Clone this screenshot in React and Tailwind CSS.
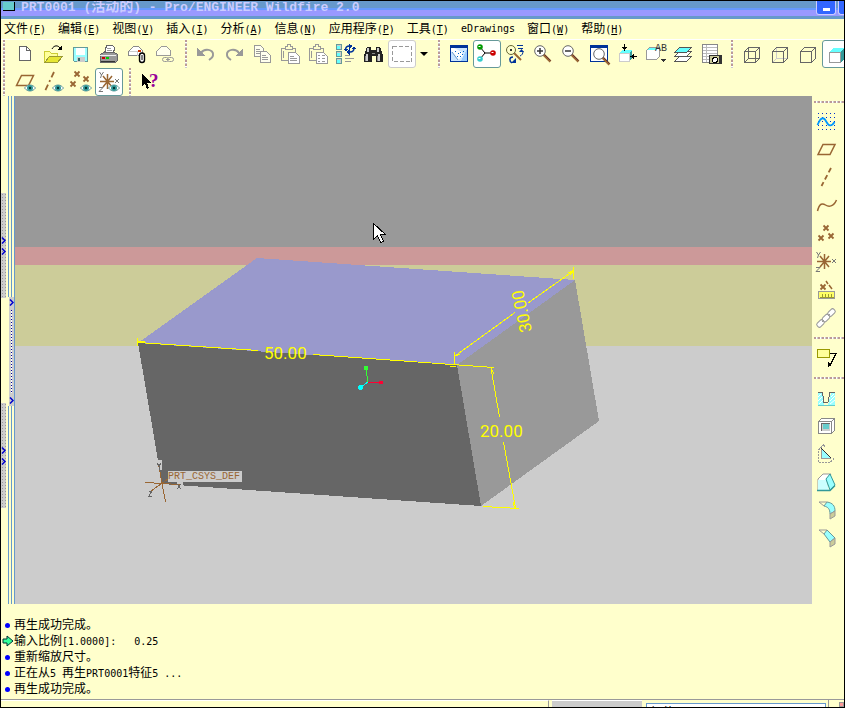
import { Fragment } from "react";

const BROWN = "#996633";
const GREY = "#999999";
const CYAN = "#99ffff";

const CJK = /([\u3000-\u9fff]+)/;

// Latin is set smaller than the Chinese so two letters take one character cell.
function Mixed({ text }) {
  return text.split(CJK).map((part, i) =>
    CJK.test(part) ? (
      <span key={i} className="text-xs leading-4">
        {part}
      </span>
    ) : (
      <Fragment key={i}>{part}</Fragment>
    )
  );
}

function Icon({ children }) {
  return (
    <svg
      className="shrink-0 overflow-visible"
      width="20"
      height="20"
      viewBox="0 0 20 20"
      fill="none"
      shapeRendering="crispEdges"
      aria-hidden="true"
    >
      {children}
    </svg>
  );
}

function Eye() {
  return (
    <g shapeRendering="auto">
      <path d="M9.500 16c3-4 8-4 11 0c-3 4-8 4-11 0z" fill="#ffffff" stroke="#669999" />
      <circle cx="15" cy="16" r="3" fill="#339999" />
      <circle cx="15" cy="16" r="1.200" fill="#003333" />
    </g>
  );
}

function Lens({ x, y, children }) {
  return (
    <g transform={`translate(${x} ${y})`} shapeRendering="auto">
      <path d="M3.500 3.500L10.500 10.500" stroke={BROWN} strokeWidth="2.500" />
      <path d="M4.500 3.500l6 6" stroke="#663333" />
      <circle r="5.300" fill="#ffffff" stroke="#666666" />
      {children}
    </g>
  );
}

function Cross({ x, y }) {
  return (
    <path
      d={`M${x - 2.5} ${y - 2.5}l5 5M${x + 2.5} ${y - 2.5}l-5 5`}
      stroke={BROWN}
      strokeWidth="1.800"
      shapeRendering="auto"
    />
  );
}

const csys = (
  <g shapeRendering="auto">
    <path
      d="M1 9.500h14M4 4l9 11M13 4L4 15M8.500 2v15"
      stroke={BROWN}
      strokeWidth="1.500"
    />
    <path
      d="M0.500 0l2 3l2-3M2.500 3l-1 3M16 7l4 4M20 7l-4 4M0 15.500h4l-4 4h4"
      stroke="#777777"
    />
  </g>
);

const clipboard = (
  <g stroke={GREY}>
    <path d="M1.500 4.500h4v-2h2v-2h3v2h2v2h3v12h-14z" fill="#ffffcc" />
    <path d="M5 5.500h8M3.500 7v7" />
    <path d="M8.500 8.500h7l4 4v7h-11z" fill="#ffffff" />
  </g>
);

const icons = {
  New: (
    <g stroke="#666666">
      <path d="M4.500 2.500h7l4 4v10h-11z" fill="#ffffff" />
      <path d="M11.500 2.500v4h4" />
    </g>
  ),
  Open: (
    <g>
      <path d="M1.500 7.500h5l2 2h6v3h-8l-5 6z" fill="#ffff99" stroke="#cccc33" />
      <path d="M1.500 18.500l5-6h13l-5 6z" fill="#e6e633" stroke="#999933" />
      <path d="M9 5c2-4 6-4 8-1" stroke="#000000" shapeRendering="auto" />
      <path d="M19 1v5h-5z" fill="#000000" />
    </g>
  ),
  Save: (
    <g>
      <path d="M2.500 3.500h14v14h-13l-1-1z" fill={CYAN} stroke="#669999" />
      <rect x="5" y="4" width="9" height="7" fill="#ffffff" />
      <rect x="6" y="13" width="8" height="5" fill="#cccccc" />
      <rect x="7" y="14" width="2" height="3" fill="#336666" />
    </g>
  ),
  Print: (
    <g>
      <path d="M5.500 9.500l2-8h6l2 2-1 6z" fill="#ffffff" stroke="#666666" />
      <path d="M8 4.500h4M8 6.500h5" stroke={GREY} />
      <path d="M1.500 10.500l3-2h11l3 2v6l-2 2h-15z" fill="#999999" stroke="#666666" />
      <path d="M1 11.500h16" stroke="#eeeeee" />
      <rect x="3" y="13" width="3" height="2" fill="#cc0000" />
      <rect x="7" y="13" width="3" height="2" fill="#00cc00" />
      <path d="M2 17.500h14" stroke="#333333" />
    </g>
  ),
  Mail: (
    <g>
      <path d="M1.500 11.500v-4l5-5h5l4 4v5z" fill="#ffffff" stroke="#888888" />
      <path d="M2 7.500h8v4" stroke="#cccccc" />
      <rect x="11" y="6" width="3" height="2" fill="#cc3300" />
      <g shapeRendering="auto">
        <rect
          x="12.500"
          y="9"
          width="5"
          height="9.500"
          rx="2.500"
          fill="#ffffff"
          stroke="#000000"
          strokeWidth="1.400"
        />
        <path d="M15 11v5" stroke="#000000" />
      </g>
    </g>
  ),
  "Send link": (
    <g stroke={GREY}>
      <path d="M1.500 11.500v-4l5-5h5l4 4v5z" fill="#ffffee" />
      <g shapeRendering="auto">
        <rect x="7.500" y="13.500" width="6" height="4" rx="2" fill="#ffffcc" />
        <rect x="12.500" y="13.500" width="6" height="4" rx="2" fill="#ffffcc" />
        <path d="M11 15.500h4" />
      </g>
    </g>
  ),
  Undo: (
    <g>
      <path
        d="M5 9c3-5 13-4 12 2c0 2-1 3-4 5"
        stroke={GREY}
        strokeWidth="2"
        shapeRendering="auto"
      />
      <path d="M1 4v8h8z" fill={GREY} />
    </g>
  ),
  Redo: (
    <g>
      <path
        d="M15 9c-3-5-13-4-12 2c0 2 1 3 4 5"
        stroke={GREY}
        strokeWidth="2"
        shapeRendering="auto"
      />
      <path d="M19 4v8h-8z" fill={GREY} />
    </g>
  ),
  Copy: (
    <g stroke={GREY}>
      <path d="M2.500 1.500h6l3 3v8h-9z" fill="#ffffee" />
      <path d="M4 5.500h4M4 7.500h5M4 9.500h5" />
      <path d="M8.500 7.500h6l4 4v7h-10z" fill="#ffffee" />
      <path d="M10 11.500h4M10 13.500h6M10 15.500h6" />
    </g>
  ),
  Paste: (
    <g>
      {clipboard}
      <path d="M10 12.500h4M10 14.500h7M10 16.500h7" stroke={GREY} />
    </g>
  ),
  "Paste special": (
    <g>
      {clipboard}
      <path
        d="M10 11.500h2M14 11.500h3M10 14.500h2M14 14.500h3M10 17.500h2M14 17.500h3"
        stroke={GREY}
      />
    </g>
  ),
  Regenerate: (
    <g>
      {[0, 7, 14].map((y) => (
        <g key={y}>
          <rect x="0.500" y={y + 0.5} width="5" height="5" fill="#cccccc" stroke="#669999" />
          <rect x="1" y={y + 2} width="3" height="3" fill="#66ffff" />
        </g>
      ))}
      <path
        d="M9.500 6c0-3 1-4 4-4M18 4c0 3-1 4-4 4"
        stroke="#003399"
        strokeWidth="1.500"
        shapeRendering="auto"
      />
      <path d="M13 0l4 2l-4 3zM14 5v6l-4-3zM7 5h5l-2 3zM15.500 5h5l-2.500-3z" fill="#003399" />
      <path d="M9 11.500h5M9 14.500h9M9 17.500h6" stroke={GREY} />
    </g>
  ),
  Find: (
    <g>
      <path d="M3 3h4v3h5V3h4l3 8v7h-7v-6H8v6H0v-7z" fill="#222222" />
      <path d="M4 4v4M14 4v4M3 10v7M15 10v7" stroke="#cccccc" strokeWidth="2" />
      <path d="M1 12v5M13 12v5M8 9h3" stroke="#888888" />
    </g>
  ),
  "Select box": (
    <rect
      x="0.500"
      y="2.500"
      width="19"
      height="15"
      stroke={GREY}
      strokeDasharray="4 2"
    />
  ),
  Repaint: (
    <g>
      <rect x="1.500" y="1.500" width="17" height="16" fill="#99ccff" stroke="#003399" />
      <path d="M2 4h16v1l-6 12H2z" fill="#cce6ff" />
      <path d="M1 2h18" stroke="#003399" strokeWidth="3" />
      <path d="M2 4h3l8 4l1 4l-5 4l-7-9z" fill="#ffffff" shapeRendering="auto" />
      <path d="M3 8l6 8" stroke="#6699cc" shapeRendering="auto" />
      <path
        d="M6 7.500h1M9 9.500h1M11 8.500h1M8 12.500h1M11 12.500h1M13 10.500h1M14 7.500h1"
        stroke="#0066cc"
      />
    </g>
  ),
  "Spin center": (
    <g shapeRendering="auto">
      <path d="M3 3l5 6h9M8 9l-5 6" stroke="#000000" />
      <circle cx="3" cy="3" r="2.800" fill="#009900" />
      <circle cx="3" cy="15" r="2.800" fill="#33cccc" />
      <circle cx="16" cy="9" r="2.800" fill="#cc0000" />
      <path d="M1.500 2.500h2M1.500 14.500h2M14.500 8.500h2" stroke="#ffffff" />
    </g>
  ),
  Orient: (
    <g shapeRendering="auto">
      <path d="M9 9l7 7" stroke={BROWN} strokeWidth="2" />
      <circle cx="6" cy="6" r="4.500" fill="#ffffcc" stroke="#666633" />
      <rect x="5" y="5" width="2" height="2" fill="#333333" />
      <path d="M12 1.500h6M13 4.500h5M18 7c0 3-1 4-3 5" stroke="#003399" />
      <path d="M14 8h5l-2.500-3z" fill="#003399" />
      <path d="M8 13c-4 0-4 4-1 6" stroke="#003399" strokeWidth="1.500" />
      <path d="M6 19h5v-5z" fill="#003399" />
    </g>
  ),
  "Zoom in": (
    <Lens x={7} y={7}>
      <path d="M-3 0h6M0-3v6" stroke="#333333" strokeWidth="1.500" />
    </Lens>
  ),
  "Zoom out": (
    <Lens x={7} y={7}>
      <path d="M-3 0h6" stroke="#333333" strokeWidth="1.500" />
    </Lens>
  ),
  Refit: (
    <g>
      <rect x="1.500" y="1.500" width="17" height="16" fill="#ffffff" stroke="#003399" />
      <path d="M1 2h18" stroke="#003399" strokeWidth="3" />
      <Lens x={10} y={10} />
    </g>
  ),
  Reorient: (
    <g>
      <path d="M2 9l4-3h9l-3 3z" fill="#66ffff" />
      <path d="M12 9l3-3v8l-3 3z" fill="#339999" />
      <rect x="2.500" y="9.500" width="10" height="8" fill="#ffffff" stroke="#cccccc" />
      <path d="M7.500 0v5M20 12.500h-5" stroke="#000000" />
      <path d="M5 3h5l-2.500 4zM17 10v5l-4-2.500z" fill="#000000" />
    </g>
  ),
  "Saved views": (
    <g>
      <path d="M1.500 6.500l3-3h10v9l-3 3h-10z" fill="#ffffff" stroke={GREY} />
      <path d="M2 6l3-2h9l-3 2z" fill="#66ffff" />
      <text x="10" y="7" fontSize="10" fill="#333333" fontFamily="Liberation Mono, monospace">
        AB
      </text>
      <path d="M15 15h6l-3 3z" fill="#333333" />
    </g>
  ),
  Layers: (
    <g stroke="#555555">
      <path d="M1.500 17.500l5-5h12l-5 5z" fill="#ffffff" />
      <path d="M1.500 12.500l5-5h12l-5 5z" fill="#ffffff" />
      <path d="M1.500 8.500l5-5h12l-5 5z" fill="#66ffff" />
    </g>
  ),
  "View manager": (
    <g>
      <rect x="1.500" y="0.500" width="15" height="18" fill="#ffffff" stroke="#888888" />
      <path
        d="M2 3.500h14M2 6.500h14M2 9.500h14M2 12.500h8M2 15.500h6M5.500 1v17"
        stroke="#bbbbbb"
      />
      <rect x="8.500" y="11.500" width="12" height="8" fill="#cccc99" stroke="#333333" />
      <circle cx="14" cy="16" r="2.500" fill="#ffffff" stroke="#000000" />
      <path d="M19 12v7" stroke="#333333" strokeWidth="2" />
    </g>
  ),
  Wireframe: (
    <path
      d="M2.500 7.500h11v11h-11zM6.500 3.500h11v11h-11zM2.500 7.500l4-4M13.500 7.500l4-4M2.500 18.500l4-4M13.500 18.500l4-4"
      stroke="#666666"
    />
  ),
  "Hidden line": (
    <g>
      <path d="M6.500 4v10.500H17M2.500 18.500l4-4" stroke="#cccccc" />
      <path d="M2.500 7.500h11v11h-11zM2.500 7.500l4-4h11v11l-4 4M13.500 7.500l4-4" stroke="#666666" />
    </g>
  ),
  "No hidden": (
    <path d="M2.500 7.500h11v11h-11zM2.500 7.500l4-4h11v11l-4 4M13.500 7.500l4-4" stroke="#666666" />
  ),
  Shading: (
    <g>
      <path d="M3 8l4-4h12l-4 4z" fill="#66ffff" />
      <path d="M14 8l5-4v10l-5 5z" fill="#339999" />
      <rect x="3.500" y="8.500" width="11" height="10" fill="#ffffff" stroke={GREY} />
    </g>
  ),
  "Plane display": (
    <g>
      <path
        d="M1.500 13.500l5-10h12l-5 10z"
        stroke={BROWN}
        strokeWidth="1.500"
        shapeRendering="auto"
      />
      <Eye />
    </g>
  ),
  "Axis display": (
    <g>
      <path
        d="M11 0L2 19"
        stroke={BROWN}
        strokeWidth="1.800"
        strokeDasharray="6 3 2 3"
        shapeRendering="auto"
      />
      <Eye />
    </g>
  ),
  "Point display": (
    <g>
      <Cross x={6} y={2} />
      <Cross x={15} y={7} />
      <Cross x={2} y={12} />
      <Eye />
    </g>
  ),
  "Csys display": (
    <g>
      {csys}
      <Eye />
    </g>
  ),
  Help: (
    <g>
      <path d="M2 2v12l3-2 2 5 2-1-2-5h4z" fill="#000000" />
      <text
        x="9"
        y="15"
        fontSize="19"
        fontWeight="bold"
        fill="#990099"
        fontFamily="Liberation Serif, serif"
      >
        ?
      </text>
    </g>
  ),
  Sketch: (
    <g>
      {[2, 6, 10, 14, 18].map((y) => (
        <path key={y} d={`M2 ${y - 0.5}h18`} stroke="#0033cc" strokeDasharray="1 3" />
      ))}
      <path
        d="M1.500 13c4-10 7-7 9-3s5 5 8 0"
        stroke="#0099ff"
        strokeWidth="1.800"
        shapeRendering="auto"
      />
    </g>
  ),
  Plane: (
    <path
      d="M2 14.500l5-10h12l-5 10z"
      stroke={BROWN}
      strokeWidth="1.500"
      shapeRendering="auto"
    />
  ),
  Axis: (
    <path
      d="M15 0L5.500 18"
      stroke={BROWN}
      strokeWidth="1.800"
      strokeDasharray="5 3"
      shapeRendering="auto"
    />
  ),
  Curve: (
    <path
      d="M1.500 15c2-8 5-8 8-6s8 2 11-5"
      stroke={BROWN}
      strokeWidth="1.500"
      shapeRendering="auto"
    />
  ),
  Point: (
    <g>
      <Cross x={10} y={4} />
      <Cross x={5} y={14} />
      <Cross x={15} y={12} />
    </g>
  ),
  Csys: csys,
  Analysis: (
    <g>
      <Cross x={7} y={7} />
      <path
        d="M10 1l2 3M13 5l3 4"
        stroke={BROWN}
        strokeWidth="1.500"
        shapeRendering="auto"
      />
      <rect x="2.500" y="11.500" width="16" height="7" fill="#ffff66" stroke={GREY} />
      <path d="M4 17.500h14M6.500 14v4M9.500 14v4M12.500 14v4M15.500 14v4" stroke="#999933" />
    </g>
  ),
  Reference: (
    <g stroke={GREY} fill="#ffffff" shapeRendering="auto">
      <rect x="-4" y="-2.500" width="8" height="5" rx="2" transform="translate(4.500 15.500) rotate(-45)" />
      <rect x="-4" y="-2.500" width="8" height="5" rx="2" transform="translate(15.500 4.500) rotate(-45)" />
      <rect x="-4" y="-2.500" width="8" height="5" rx="2" transform="translate(10 10) rotate(-45)" />
      <path d="M6 14l2-2M12 8l2-2" />
    </g>
  ),
  Annotation: (
    <g>
      <rect x="1.500" y="1.500" width="12" height="8" fill="#ffff99" stroke="#999900" />
      <path d="M14 5.500h6l-6 12" stroke="#000000" />
      <path d="M12 14v5l4-2z" fill="#000000" />
    </g>
  ),
  Hole: (
    <g>
      <path d="M2 5h4l2 12h4l3-12h4v13H2z" fill="#99ffff" />
      <path
        d="M2 9l3-3M2 13l4-4M3 16l4-4M15 9l3-3M14 13l5-5M14 16l5-4"
        stroke="#ffffff"
        shapeRendering="auto"
      />
      <path d="M2 17.500h17" stroke="#66cccc" />
      <path d="M7 4h6l1 2l-2 8H8L6 6z" fill="#ffffcc" />
      <path
        d="M2 4.500h4.500l1.500 10h4l2-10h5"
        stroke="#666666"
      />
    </g>
  ),
  Shell: (
    <g>
      <path d="M2.500 5.500l3-3h13v12l-3 3h-13z" fill="#ffffff" stroke="#888888" />
      <path d="M2.500 5.500h13v12M15.500 5.500l3-3" stroke="#888888" />
      <rect x="5" y="7" width="9" height="8" fill="#cccccc" />
      <rect x="7" y="8" width="6" height="5" fill="#66cccc" />
      <path d="M5.500 15V7.500H14" stroke="#666666" />
    </g>
  ),
  Rib: (
    <g>
      <path d="M2.500 18V6l6-6v3M3 18.500h11l5-5" stroke={GREY} strokeDasharray="2 1" />
      <path d="M5 5l10 10H5z" fill="#99ffff" />
      <path d="M5.500 5v9.500H15" stroke={GREY} />
      <path d="M5 4l10 10" stroke="#333333" shapeRendering="auto" />
    </g>
  ),
  Draft: (
    <g shapeRendering="auto">
      <path d="M2 7l5-5h8l-4 5v11H2z" fill="#ffffff" stroke={GREY} />
      <path d="M2 8h8l3 10H2z" fill="#ccffff" />
      <path d="M10 7l4-5 5 11-5 5z" fill="#99ffff" stroke="#339999" />
      <path d="M1 18.500h13l5-5" stroke="#339999" strokeWidth="1.500" />
    </g>
  ),
  Round: (
    <g shapeRendering="auto">
      <path d="M8 6l3-4c6 1 8 4 8 9l-5 3c0-5-2-7-6-8z" fill="#99ffff" stroke="#669999" />
      <path d="M14 14l5-3v5l-5 3z" fill="#cccc99" stroke={GREY} />
      <path d="M3 2h8M3 2l5 4" stroke={GREY} />
    </g>
  ),
  Chamfer: (
    <g shapeRendering="auto">
      <path d="M8 6l3-4 8 8-5 4z" fill="#99ffff" stroke="#669999" />
      <path d="M14 14l5-4v6l-5 3z" fill="#cccc99" stroke={GREY} />
      <path d="M3 2h8M3 2l5 4" stroke={GREY} />
    </g>
  ),
};

const menus = [
  ["文件", "F"],
  ["编辑", "E"],
  ["视图", "V"],
  ["插入", "I"],
  ["分析", "A"],
  ["信息", "N"],
  ["应用程序", "P"],
  ["工具", "T"],
  ["eDrawings", ""],
  ["窗口", "W"],
  ["帮助", "H"],
];

const fileTools = ["New", "Open", "Save", "Print", "Mail", "Send link"];
const editTools = [
  "Undo",
  "Redo",
  "Copy",
  "Paste",
  "Paste special",
  "Regenerate",
  "Find",
];
const viewTools = [
  "Repaint",
  "Spin center",
  "Orient",
  "Zoom in",
  "Zoom out",
  "Refit",
  "Reorient",
  "Saved views",
  "Layers",
  "View manager",
];
const displayTools = ["Wireframe", "Hidden line", "No hidden", "Shading"];
const datumDisplay = [
  "Plane display",
  "Axis display",
  "Point display",
  "Csys display",
];
const datumTools = [
  "Sketch",
  "Plane",
  "Axis",
  "Curve",
  "Point",
  "Csys",
  "Analysis",
  "Reference",
];
const featureTools = ["Hole", "Shell", "Rib", "Draft", "Round", "Chamfer"];

const pressed = ["Spin center", "Shading", "Csys display"];

const messages = [
  { text: "再生成功完成。" },
  { text: "输入比例[1.0000]:   0.25", prompt: true },
  { text: "重新缩放尺寸。" },
  { text: "正在从5 再生PRT0001特征5 ..." },
  { text: "再生成功完成。" },
];

function ToolButton({ name }) {
  const border = pressed.includes(name)
    ? "border-[#669999] bg-white"
    : name === "Select box"
      ? "border-[#cccccc] bg-white"
      : "border-transparent";

  return (
    <button
      type="button"
      aria-label={name}
      className={`flex size-7 shrink-0 items-center justify-center rounded-[3px] border ${border}`}
    >
      <Icon>{icons[name]}</Icon>
    </button>
  );
}

function Tools({ names }) {
  return names.map((name) => <ToolButton key={name} name={name} />);
}

function GripBar() {
  return (
    <div className="h-7 w-0.5 bg-[repeating-linear-gradient(180deg,#bb9999_0_2px,#ffffff_2px_3px,#cccccc_3px_4px)]" />
  );
}

function Grip() {
  return (
    <div className="flex w-[13px] shrink-0 justify-center">
      <GripBar />
    </div>
  );
}

// Grip at the window's edge, tighter than the ones between groups.
function EdgeGrip() {
  return (
    <div className="flex w-2.5 shrink-0 pl-0.5">
      <GripBar />
    </div>
  );
}

function SideGrip() {
  return (
    <div className="flex h-3 w-full shrink-0 items-center">
      <div className="ml-0.5 h-0.5 w-full bg-[repeating-linear-gradient(90deg,#bb9999_0_2px,#ffffff_2px_3px,#cccccc_3px_4px)]" />
    </div>
  );
}

function Chevron() {
  return (
    <svg width="5" height="7" viewBox="0 0 5 7" fill="none" aria-hidden="true">
      <path d="M1 0.500l3 3l-3 3" stroke="#0000cc" strokeWidth="1.500" />
    </svg>
  );
}

function Sash() {
  return (
    <button
      type="button"
      aria-label="Toggle panel"
      className="flex w-full flex-105 flex-col items-center justify-center gap-1 bg-[#cccccc] bg-[radial-gradient(#999999_1px,transparent_1px)] bg-[size:3px_3px]"
    >
      <Chevron />
      <Chevron />
    </button>
  );
}

function LeftRail() {
  return (
    <div className="flex w-3.5 shrink-0 border-r border-[#6699cc]">
      <div className="flex w-[5px] flex-col">
        <div className="flex-97" />
        <Sash />
        <div className="flex-105" />
        <Sash />
        <div className="flex-96" />
      </div>
      <div className="flex flex-1 flex-col items-end">
        <div className="mr-0.5 w-1 flex-202 border-x border-[#6699cc]" />
        <div className="flex w-[5px] flex-105 flex-col items-center justify-between bg-[#cccccc] py-0.5">
          <Chevron />
          <div className="my-1 w-px flex-1 bg-[repeating-linear-gradient(180deg,#000099_0_1px,#ffffff_1px_3px)]" />
          <Chevron />
        </div>
        <div className="mr-0.5 w-1 flex-199 border-x border-[#6699cc]" />
      </div>
    </div>
  );
}

function Viewport() {
  return (
    <svg
      className="block size-full"
      viewBox="15 96 797 508"
      preserveAspectRatio="xMidYMid slice"
      shapeRendering="crispEdges"
      fill="none"
      role="img"
      aria-label="PRT0001"
    >
      <rect x="15" y="96" width="797" height="151" fill="#999999" />
      <rect x="15" y="247" width="797" height="18" fill="#cc9999" />
      <rect x="15" y="265" width="797" height="81" fill="#cccc99" />
      <rect x="15" y="346" width="797" height="258" fill="#cccccc" />

      <path d="M257 258L575 280L457 365L138 343z" fill="#9999cc" />
      <path d="M138 343L457 365L481 506L162 484z" fill="#666666" />
      <path d="M457 365L575 280L599 421L481 506z" fill="#999999" />

      {/* dimensions */}
      <g stroke="#ffff00">
        <path d="M137.500 338v8M138 342.500L258 350.500M313 354.500L494 367.500" />
        <path d="M138 341h7M450 366h6" />
        <path d="M454.500 352v12M455 356L515 312.500M528 303L574 270.500M573.500 267v12" />
        <path d="M455 356l5-2M568 273l6-3l-4 5" />
        <path d="M491 368L499.500 417M503.500 442L515.500 508M483 506.500L519 508.500" />
        <path d="M491 368l3 6M513 502l2 7l3-1" />
      </g>
      <g
        fill="#ffff00"
        fontFamily="Roboto, Liberation Sans, sans-serif"
        fontSize="17"
      >
        <text x="264" y="359">50.00</text>
        <text x="480" y="437">20.00</text>
        <text transform="translate(532 331) rotate(-102)">30.00</text>
      </g>

      {/* spin center */}
      <path d="M368 382L366 369" stroke="#33ff33" />
      <rect x="364" y="366" width="4" height="4" fill="#33ff33" />
      <path d="M368 382.500h14" stroke="#ff0033" />
      <circle cx="381" cy="382.500" r="2" fill="#ff0033" />
      <path d="M368 382L361 387" stroke="#00ffff" />
      <circle cx="360.500" cy="387.500" r="2.500" fill="#00ffff" />

      {/* default coordinate system */}
      <rect x="157" y="460" width="5" height="10" fill="#cccccc" />
      <rect x="168" y="471" width="74" height="11" fill="#cccccc" />
      <rect x="177" y="482" width="6" height="8" fill="#cccccc" />
      <path
        d="M145 482.500L180 484.500M158.500 464L165.500 502M151 491L168 479"
        stroke={BROWN}
      />
      <path
        d="M157 463l2 3l2-3M159 466v4M177 484l4 5M181 484l-4 5M149 491h3l-3 5h3"
        stroke="#666666"
      />
      <text
        x="168"
        y="479"
        fontSize="10"
        fill={BROWN}
        fontFamily="Liberation Mono, monospace"
      >
        PRT_CSYS_DEF
      </text>

      {/* pointer */}
      <path
        d="M373.500 223.500v16l4-4l3 7l3-1l-3-7h5z"
        fill="#ffffff"
        stroke="#000000"
      />
    </svg>
  );
}

function MenuBar() {
  return (
    <nav className="flex h-[21px] shrink-0 items-center gap-3 overflow-hidden border-b border-white pl-[3px] whitespace-nowrap">
      {menus.map(([label, key]) => (
        <button key={label} type="button" className="flex items-baseline leading-4">
          <Mixed text={label} />
          {key && (
            <span>
              (<u>{key}</u>)
            </span>
          )}
        </button>
      ))}
    </nav>
  );
}

function Messages() {
  return (
    <ul className="shrink-0 pt-[13px] pb-0.5">
      {messages.map(({ text, prompt }, i) => (
        <li key={i} className="flex h-4 items-center">
          <span className="flex w-[13px] shrink-0 justify-center">
            {prompt ? (
              <svg width="12" height="12" viewBox="0 0 12 12" aria-hidden="true">
                <path
                  d="M1 4h4V1l6 5l-6 5V8H1z"
                  fill="#33ff99"
                  stroke="#003333"
                  strokeWidth="1"
                />
              </svg>
            ) : (
              <span className="size-[5px] rounded-full bg-[#0000ff]" />
            )}
          </span>
          <span className="leading-4 whitespace-pre">
            <Mixed text={text} />
          </span>
        </li>
      ))}
    </ul>
  );
}

function StatusBar() {
  return (
    <footer className="flex h-2 shrink-0 overflow-hidden border-t border-[#999999]">
      <div className="flex-1 border-t border-r border-t-white border-r-[#999999]" />
      <div className="ml-[3px] w-[90px] border-t border-white bg-[#cccccc]" />
      <select
        aria-label="Filter"
        className="mt-[3px] ml-1 h-5 w-[180px] shrink-0 appearance-none self-start border border-[#6699cc] bg-white px-1 text-xs"
      >
        <option>智能</option>
      </select>
      <div className="ml-0.5 w-px bg-[#999999]" />
      <div className="mt-0.5 ml-2.5 size-[5px] border border-[#999999] bg-[#ff9999]" />
    </footer>
  );
}

export default function App() {
  return (
    <div className="flex h-screen flex-col overflow-hidden border border-black bg-[#ffffcc] font-['DejaVu_Sans_Mono','Noto_Sans_CJK_SC',monospace] text-[10px] text-black">
      <header className="flex h-[18px] shrink-0 items-start justify-between bg-[linear-gradient(180deg,#6699cc_0_7px,#6699ff_7px_9px,#9999ff_9px_15px,#6699cc_15px)]">
        <div className="flex items-start">
          <div className="mt-px ml-0.5 h-[9px] w-3 border-r border-b border-black bg-[#66cccc]" />
          <h1 className="ml-1.5 font-['Liberation_Mono','Noto_Sans_CJK_SC',monospace] text-[13px] leading-3 font-bold whitespace-pre text-[#ccccff]">
            PRT0001 (<span className="text-sm leading-3">活动的</span>) -
            Pro/ENGINEER Wildfire 2.0
          </h1>
        </div>
        <div className="flex gap-0.5">
          <button
            type="button"
            aria-label="Minimize"
            className="flex h-3.5 w-5 items-end justify-center rounded-b-[3px] border border-t-0 border-[#ccccff] bg-[#3366ff] pb-[3px]"
          >
            <span className="h-[3px] w-[7px] bg-white" />
          </button>
          <button
            type="button"
            aria-label="Maximize"
            className="h-3.5 w-1.5 rounded-bl-[3px] border border-t-0 border-r-0 border-[#ccccff] bg-[#3366ff]"
          />
        </div>
      </header>

      <MenuBar />

      <div className="flex h-7 shrink-0 overflow-hidden">
        <EdgeGrip />
        <Tools names={fileTools} />
        <Grip />
        <Tools names={editTools} />
        <ToolButton name="Select box" />
        <button
          type="button"
          aria-label="Selection options"
          className="flex w-4 shrink-0 items-center justify-center"
        >
          <svg width="8" height="4" viewBox="0 0 8 4" aria-hidden="true">
            <path d="M0 0h8L4 4z" fill="#000000" />
          </svg>
        </button>
        <Grip />
        <Tools names={viewTools} />
        <Grip />
        <Tools names={displayTools} />
      </div>
      <div className="flex h-7 shrink-0 overflow-hidden">
        <EdgeGrip />
        <Tools names={datumDisplay} />
        <Grip />
        <ToolButton name="Help" />
      </div>

      <div className="flex min-h-0 flex-1">
        <LeftRail />
        <main className="min-w-0 flex-1">
          <Viewport />
        </main>
        <aside className="flex w-8 shrink-0 flex-col items-start overflow-hidden">
          <SideGrip />
          <Tools names={datumTools} />
          <SideGrip />
          <ToolButton name="Annotation" />
          <SideGrip />
          <Tools names={featureTools} />
        </aside>
      </div>

      <Messages />
      <StatusBar />
    </div>
  );
}
